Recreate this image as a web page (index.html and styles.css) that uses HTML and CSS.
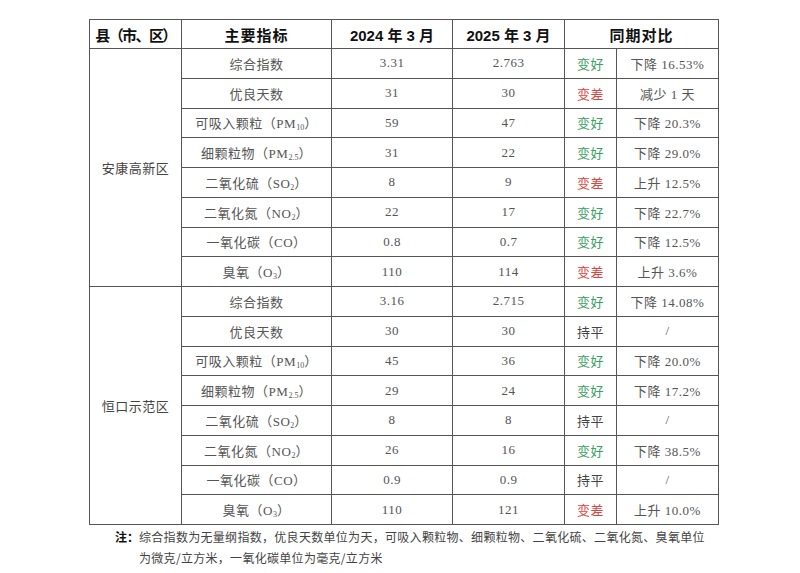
FILE: index.html
```html
<!DOCTYPE html>
<html lang="zh">
<head>
<meta charset="utf-8">
<link rel="stylesheet" href="styles.css">
</head>
<body>
<div class="page">
<table class="aq">
<colgroup>
<col class="c1"><col class="c2"><col class="c3"><col class="c4"><col class="c5"><col class="c6">
</colgroup>
<thead>
<tr><th class="county">县（市、区）</th><th>主要指标</th><th class="month">2024 年 3 月</th><th class="month">2025 年 3 月</th><th colspan="2">同期对比</th></tr>
</thead>
<tbody>
<tr><td rowspan="8" class="area">安康高新区</td><td>综合指数</td><td>3.31</td><td>2.763</td><td class="good">变好</td><td>下降 16.53%</td></tr>
<tr><td>优良天数</td><td>31</td><td>30</td><td class="bad">变差</td><td>减少 1 天</td></tr>
<tr><td>可吸入颗粒（PM<sub>10</sub>）</td><td>59</td><td>47</td><td class="good">变好</td><td>下降 20.3%</td></tr>
<tr><td>细颗粒物（PM<sub>2.5</sub>）</td><td>31</td><td>22</td><td class="good">变好</td><td>下降 29.0%</td></tr>
<tr><td>二氧化硫（SO<sub>2</sub>）</td><td>8</td><td>9</td><td class="bad">变差</td><td>上升 12.5%</td></tr>
<tr><td>二氧化氮（NO<sub>2</sub>）</td><td>22</td><td>17</td><td class="good">变好</td><td>下降 22.7%</td></tr>
<tr><td>一氧化碳（CO）</td><td>0.8</td><td>0.7</td><td class="good">变好</td><td>下降 12.5%</td></tr>
<tr><td>臭氧（O<sub>3</sub>）</td><td>110</td><td>114</td><td class="bad">变差</td><td>上升 3.6%</td></tr>
<tr><td rowspan="8" class="area">恒口示范区</td><td>综合指数</td><td>3.16</td><td>2.715</td><td class="good">变好</td><td>下降 14.08%</td></tr>
<tr><td>优良天数</td><td>30</td><td>30</td><td class="flat">持平</td><td>/</td></tr>
<tr><td>可吸入颗粒（PM<sub>10</sub>）</td><td>45</td><td>36</td><td class="good">变好</td><td>下降 20.0%</td></tr>
<tr><td>细颗粒物（PM<sub>2.5</sub>）</td><td>29</td><td>24</td><td class="good">变好</td><td>下降 17.2%</td></tr>
<tr><td>二氧化硫（SO<sub>2</sub>）</td><td>8</td><td>8</td><td class="flat">持平</td><td>/</td></tr>
<tr><td>二氧化氮（NO<sub>2</sub>）</td><td>26</td><td>16</td><td class="good">变好</td><td>下降 38.5%</td></tr>
<tr><td>一氧化碳（CO）</td><td>0.9</td><td>0.9</td><td class="flat">持平</td><td>/</td></tr>
<tr><td>臭氧（O<sub>3</sub>）</td><td>110</td><td>121</td><td class="bad">变差</td><td>上升 10.0%</td></tr>
</tbody>
</table>
<p class="note"><b>注：</b><span>综合指数为无量纲指数，优良天数单位为天，可吸入颗粒物、细颗粒物、二氧化硫、二氧化氮、臭氧单位为微克/立方米，一氧化碳单位为毫克/立方米</span></p>
</div>
</body>
</html>
```
FILE: styles.css
```css
html, body {
  margin: 0;
  padding: 0;
  background: #fff;
}
.page {
  padding: 19px 0 0 89px;
  font-family: "Liberation Serif", "Noto Sans CJK SC", serif;
}
.aq {
  border-collapse: collapse;
  table-layout: fixed;
  width: 629px;
}
.c1 { width: 92px; }
.c2 { width: 150px; }
.c3 { width: 121px; }
.c4 { width: 112px; }
.c5 { width: 52px; }
.c6 { width: 102px; }
.aq th, .aq td {
  border: 1.5px solid #555;
  text-align: center;
  vertical-align: middle;
  padding: 0;
}
.aq th {
  height: 28px;
  font-family: "Liberation Sans", "Noto Sans CJK SC", sans-serif;
  font-weight: bold;
  font-size: 15px;
  letter-spacing: 1px;
  color: #111;
  white-space: nowrap;
}
.aq th.county {
  letter-spacing: -1.6px;
}
.aq th.month {
  letter-spacing: 0;
}
.aq tbody tr {
  height: 29.75px;
}
.aq td {
  font-size: 13px;
  color: #555;
  letter-spacing: 0.5px;
}
.aq sub {
  font-size: 8px;
  vertical-align: -2px;
  line-height: 0;
  letter-spacing: 0;
}
.aq td.area {
  color: #444;
}
.aq td.good { color: #3c9e5f; font-family: "Noto Sans CJK SC", sans-serif; }
.aq td.bad { color: #d9463f; font-family: "Noto Sans CJK SC", sans-serif; }
.aq td.flat { color: #444; font-family: "Noto Sans CJK SC", sans-serif; }
.note {
  margin: 1px 0 0 26px;
  font-family: "Noto Sans CJK SC", sans-serif;
  font-size: 12px;
  line-height: 21px;
  color: #444;
  display: flex;
}
.note b {
  flex: none;
  white-space: nowrap;
  color: #111;
  font-weight: bold;
}
.note span {
  width: 570px;
  letter-spacing: 0.3px;
}
```
